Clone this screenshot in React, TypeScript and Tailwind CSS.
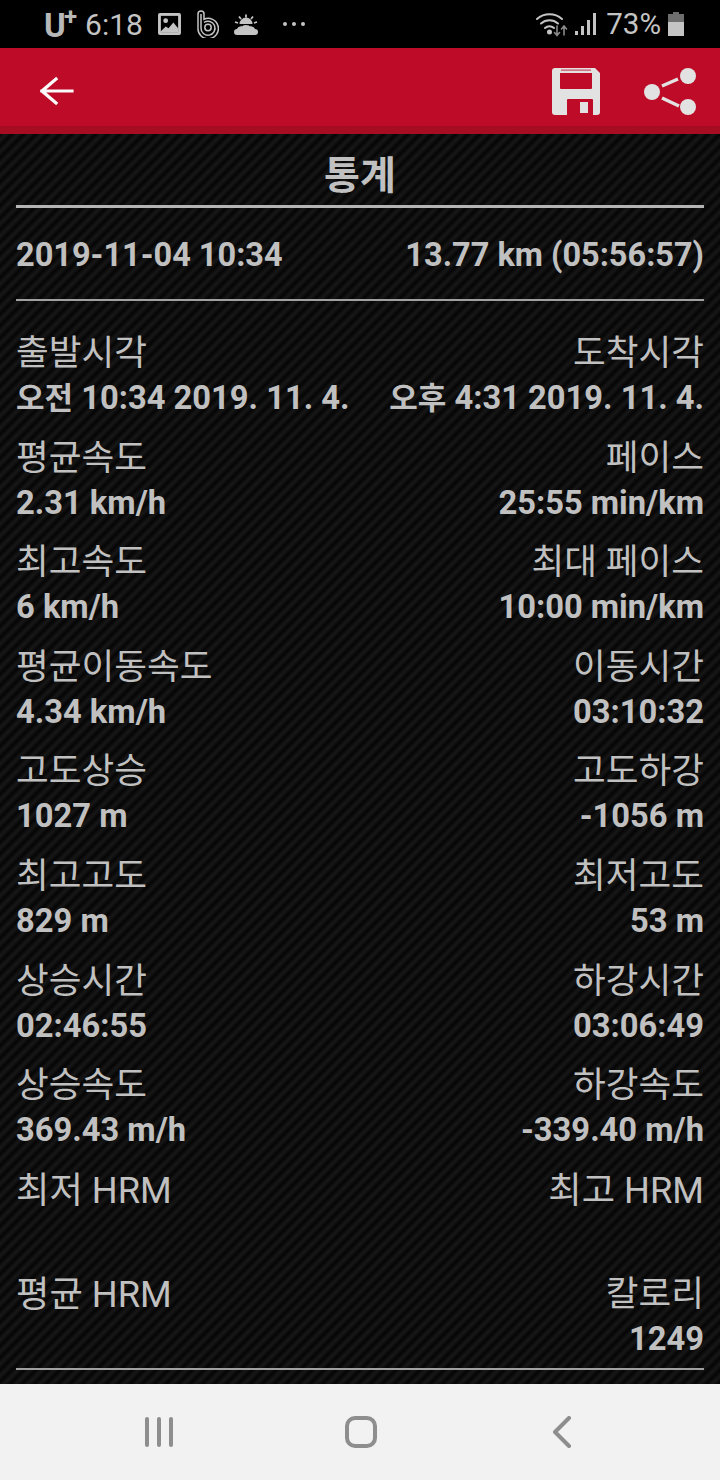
const rows: [string, string, string, string][] = [
  ["출발시각", "오전 10:34 2019. 11. 4.", "도착시각", "오후 4:31 2019. 11. 4."],
  ["평균속도", "2.31 km/h", "페이스", "25:55 min/km"],
  ["최고속도", "6 km/h", "최대 페이스", "10:00 min/km"],
  ["평균이동속도", "4.34 km/h", "이동시간", "03:10:32"],
  ["고도상승", "1027 m", "고도하강", "-1056 m"],
  ["최고고도", "829 m", "최저고도", "53 m"],
  ["상승시간", "02:46:55", "하강시간", "03:06:49"],
  ["상승속도", "369.43 m/h", "하강속도", "-339.40 m/h"],
  ["최저 HRM", "", "최고 HRM", ""],
  ["평균 HRM", "", "칼로리", "1249"],
];

function Value({ value }: { value: string }) {
  const hangul = /^[오]/.test(value);
  if (!hangul) return <>{value}</>;
  const i = value.indexOf(" ");
  return (
    <>
      <span className="font-semibold text-[31px]">{value.slice(0, i)}</span>
      {value.slice(i)}
    </>
  );
}

function Cell({ label, value, right }: { label: string; value: string; right?: boolean }) {
  const size = label.includes("HRM") ? "text-[36.300px]" : "text-[35.600px]";
  return (
    <div className={right ? "flex flex-col items-end text-right" : "flex flex-col items-start"}>
      <div className={`h-[48px] ${size} leading-[51px] text-[#c0c0c0] whitespace-nowrap`}>{label}</div>
      <div className="h-[42px] text-[32.700px] leading-[44px] font-bold text-[#c0c0c0] whitespace-nowrap">
        <Value value={value} />
      </div>
    </div>
  );
}

export default function App() {
  return (
    <div className="w-[720px] h-[1480px] flex flex-col bg-black overflow-hidden font-['Roboto','Noto_Sans_CJK_KR',sans-serif]">
      <div className="h-[48px] bg-black flex items-center justify-between pl-[44px] pr-[36px] text-[#c4c4c4]">
        <div className="flex items-center">
          <span className="text-[33px] font-bold leading-none tracking-tight mt-[2px] text-[#b8b8b8]">U</span>
          <span className="text-[24px] font-bold leading-none mb-[14px] -ml-[1px] text-[#b8b8b8]">+</span>
          <span className="text-[30px] leading-none ml-[8px] mt-[2px]">6:18</span>
          <svg width="23" height="22" viewBox="0 0 24 23" className="ml-[15px]">
            <rect x="0" y="0" width="24" height="23" rx="2" fill="#c4c4c4" />
            <rect x="3" y="3" width="18" height="17" fill="#000" />
            <circle cx="8" cy="8" r="2.500" fill="#c4c4c4" />
            <path d="M3 19l5-5 3 2 5-6 5 6v4H3z" fill="#c4c4c4" />
          </svg>
          <svg width="22" height="28" viewBox="0 0 22 28" className="ml-[16px]" fill="none" stroke="#c4c4c4" strokeWidth="1.500">
            <path d="M1 4a3 3 0 0 1 6 0v5.300a10.200 10.200 0 1 1-6 8.700z" />
            <path d="M4 4v14a7 7 0 1 0 3-5.500" />
            <circle cx="11" cy="17.500" r="3.200" />
          </svg>
          <svg width="24" height="21" viewBox="0 0 24 21" className="ml-[15px]" fill="#c4c4c4">
            <path d="M12 0.500v3M5 2.500l2 2.500M19 2.500l-2 2.500M1 8l3 1M23 8l-3 1" stroke="#c4c4c4" strokeWidth="1.800" fill="none" />
            <path d="M5.500 10a6.500 6.500 0 0 1 13 0z" />
            <path d="M0 18a3 3 0 0 1 3-3c1-3 4-4 6-3.500 1.500-.8 4-.8 6 0 2.500-.5 5 1 6 3.500a3 3 0 0 1 3 3 3 3 0 0 1-3 3H3a3 3 0 0 1-3-3z" />
            <path d="M2 13.500C5 12 7 11.500 9 11.500" stroke="#000" strokeWidth="1.200" fill="none" />
            <path d="M22 13.500C19 12 17 11.500 15 11.500" stroke="#000" strokeWidth="1.200" fill="none" />
          </svg>
          <div className="flex ml-[25px] gap-[5px] items-center">
            <span className="w-[4px] h-[4px] rounded-full bg-[#c4c4c4]" />
            <span className="w-[4px] h-[4px] rounded-full bg-[#c4c4c4]" />
            <span className="w-[4px] h-[4px] rounded-full bg-[#c4c4c4]" />
          </div>
        </div>
        <div className="flex items-center">
          <svg width="32" height="26" viewBox="0 0 32 26" fill="none" stroke="#c4c4c4" strokeWidth="2" strokeLinecap="round">
            <path d="M1 8a19 19 0 0 1 25 0" />
            <path d="M5 12.500a13 13 0 0 1 17 0" />
            <path d="M9 17a7 7 0 0 1 9 0" />
            <circle cx="13.500" cy="21" r="1.500" fill="#c4c4c4" />
            <path d="M21 15v9M18.500 21.500l2.500 3 2.500-3" stroke="#8a8a8a" strokeWidth="1.600" />
            <path d="M28 24v-9M25.500 18l2.500-3 2.500 3" stroke="#8a8a8a" strokeWidth="1.600" />
          </svg>
          <svg width="21" height="24" viewBox="0 0 21 24" className="ml-[7px]" fill="#c4c4c4">
            <rect x="0" y="19" width="3" height="4" />
            <rect x="6" y="14" width="3" height="9" />
            <rect x="12" y="8" width="3" height="15" />
            <rect x="18" y="1" width="3" height="22" />
          </svg>
          <span className="text-[29.500px] leading-none ml-[10px] mt-[2px]">73%</span>
          <svg width="16" height="24" viewBox="0 0 16 24" className="ml-[7px]">
            <path d="M5 0h6v2h5v22H0V2h5z" fill="#c4c4c4" />
            <rect x="0" y="2" width="16" height="8" fill="#6e6e6e" />
            <path d="M5 0h6v2H5z" fill="#6e6e6e" />
          </svg>
        </div>
      </div>

      <div className="h-[86px] bg-[#be0b27] border-b-[8px] border-[#a70d22] flex items-center justify-between pl-[40px] pr-[24px] pt-[8px]">
        <svg width="34" height="32" viewBox="0 0 34 32" fill="none" stroke="#fafafa" strokeWidth="3.200" strokeLinecap="square">
          <path d="M2 16h30M16 4L2 16l14 12" />
        </svg>
        <div className="flex items-center gap-[44px]">
          <svg width="48" height="47" viewBox="0 0 48 47" fill="#e2e2e2">
            <path fillRule="evenodd" d="M3 0H43L48 5V44a3 3 0 0 1-3 3H3a3 3 0 0 1-3-3V3a3 3 0 0 1 3-3zM8 5V20a1 1 0 0 0 1 1H39a1 1 0 0 0 1-1V5zM16 31a1 1 0 0 0-1 1V47H41V32a1 1 0 0 0-1-1zM28 34h8V45H28z" />
            <rect x="9" y="1.500" width="30" height="1.200" fill="#be0b27" opacity="0.700" />
          </svg>
          <svg width="52" height="47" viewBox="0 0 52 47" fill="#e2e2e2" stroke="#e2e2e2">
            <path d="M18 18L34 11M18 30L35 38" strokeWidth="3.500" />
            <circle cx="8" cy="24" r="8" strokeWidth="0" />
            <circle cx="44" cy="8" r="8" strokeWidth="0" />
            <circle cx="44" cy="39" r="8" strokeWidth="0" />
          </svg>
        </div>
      </div>

      <div className="h-[1250px] px-[16px] bg-[#0a0a0a] bg-[linear-gradient(135deg,#050505,#171717_25%,#050505_50%,#171717_75%,#050505)] bg-[length:12px_12px]">
        <div className="h-[74px] border-b-[3px] border-[#b4b4b4] flex items-center justify-center">
          <span className="text-[39px] font-bold text-[#c0c0c0] leading-none mt-[13px]">통계</span>
        </div>
        <div className="h-[93px] border-b-2 border-[#a0a0a0] flex items-center justify-between pt-[3px]">
          <span className="text-[32.500px] font-bold text-[#c0c0c0] whitespace-nowrap">2019-11-04 10:34</span>
          <span className="text-[32.500px] font-bold text-[#c0c0c0] whitespace-nowrap">13.77 km (05:56:57)</span>
        </div>
        <div className="pt-[27px] flex flex-col gap-[14.600px]">
          {rows.map((r) => (
            <div key={r[0]} className="flex justify-between">
              <Cell label={r[0]} value={r[1]} />
              <Cell label={r[2]} value={r[3]} right />
            </div>
          ))}
        </div>
        <div className="mt-[9px] border-b-2 border-[#a0a0a0]" />
      </div>

      <div className="h-[96px] bg-[#f2f2f2] flex items-center relative">
        <div className="flex gap-[8px] ml-[145px]">
          <span className="w-[4px] h-[30px] rounded-full bg-[#8e8e8e]" />
          <span className="w-[4px] h-[30px] rounded-full bg-[#8e8e8e]" />
          <span className="w-[4px] h-[30px] rounded-full bg-[#8e8e8e]" />
        </div>
        <div className="w-[32px] h-[32px] ml-[172px] rounded-[10px] border-[4px] border-[#8e8e8e]" />
        <svg width="20" height="32" viewBox="0 0 20 32" className="ml-[175px]" fill="none" stroke="#8e8e8e" strokeWidth="4" strokeLinecap="round" strokeLinejoin="round">
          <path d="M17 2L3 16l14 14" />
        </svg>
      </div>
    </div>
  );
}
